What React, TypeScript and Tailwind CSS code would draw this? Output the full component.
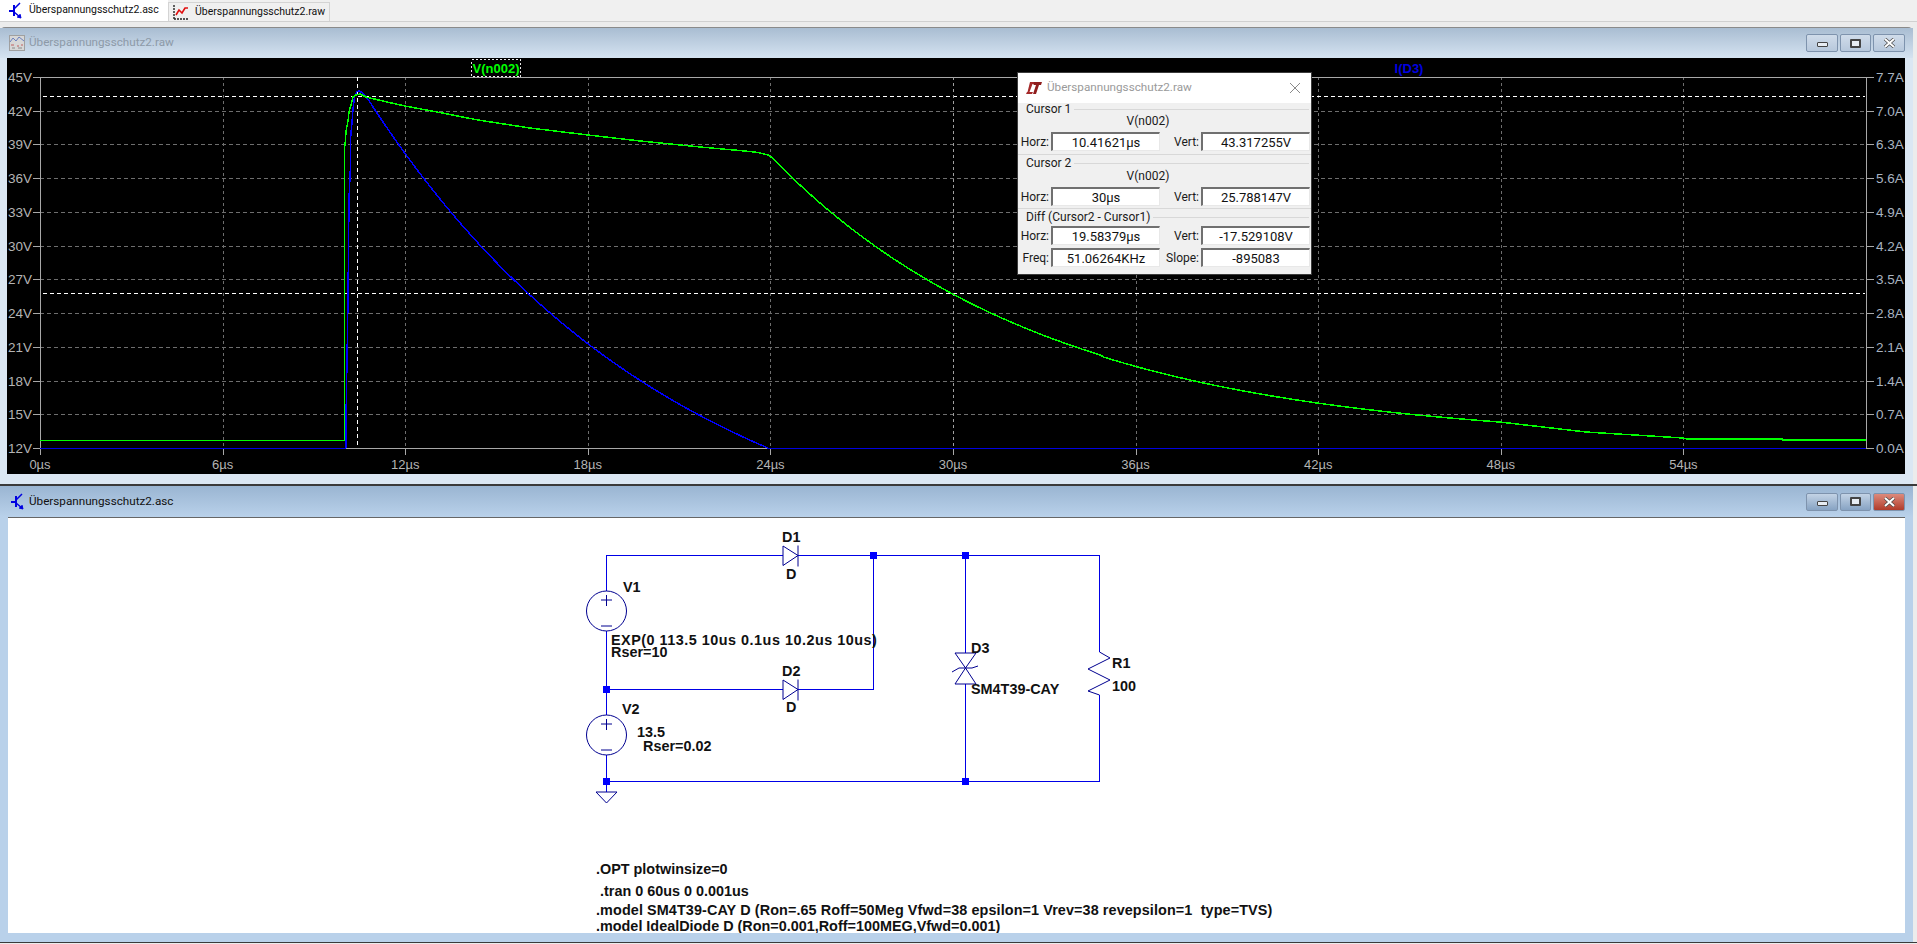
import React from 'react';

const mono = "font-['Liberation_Sans',sans-serif]";

const yTicks = [
  ['45V', '7.7A'], ['42V', '7.0A'], ['39V', '6.3A'], ['36V', '5.6A'], ['33V', '4.9A'], ['30V', '4.2A'],
  ['27V', '3.5A'], ['24V', '2.8A'], ['21V', '2.1A'], ['18V', '1.4A'], ['15V', '0.7A'], ['12V', '0.0A'],
];
const xTicks = ['0µs', '6µs', '12µs', '18µs', '24µs', '30µs', '36µs', '42µs', '48µs', '54µs'];

const X0 = 40, X1 = 1866, Y0 = 78, Y1 = 449;
const yAt = (i: number) => Y0 + ((Y1 - Y0) / 11) * i;
const xAt = (i: number) => X0 + ((X1 - X0) / 10) * i;

const greenPoints = () => {
  const pts: number[][] = [
    [345, 147], [346, 132], [348, 122], [349, 113], [351, 106], [352, 102], [353, 98], [356, 96],
    [360, 95], [366, 98], [387, 103], [405, 107], [437, 113], [478, 121], [530, 129], [588, 136], [640, 142], [700, 148], [745, 152], [758, 153.5], [768, 156],
  ];
  for (let x = 772; x <= 1500; x += 4) {
    const t = (x - 768) / 30.43;
    const v = 12.6 + 25.6 * Math.exp(-t / 9.06);
    pts.push([x, Y1 - (v - 12) * 11.24 + (x > 1100 ? 1 : 0)]);
  }
  pts.push([1586, 433], [1683, 439], [1687, 440], [1782, 440], [1783, 441], [X1, 441]);
  return pts.map((p) => p.join(',')).join(' ');
};

const bluePoints = () => {
  const pts: number[][] = [
    [346, 449], [346, 420], [348, 300], [349, 200], [350.5, 167], [350.5, 140], [352, 123], [353, 110], [354.7, 97], [356.7, 93], [359, 92], [362.7, 94], [365, 97],
  ];
  for (let x = 368; x < 768; x += 4) {
    const h = 497 * (Math.exp(-(x - 358) / 310) - 0.2665);
    pts.push([x, Y1 - h]);
  }
  pts.push([768, 449]);
  return pts.map((p) => p.join(',')).join(' ');
};

const TitleButtons = ({ active }: { active?: boolean }) => {
  const base = 'h-[18px] flex items-center justify-center rounded-[2px] border border-[#7e93ad] bg-gradient-to-b';
  const tone = active ? 'from-[#c3d3e5] to-[#87a3c3]' : 'from-[#d0dcea] to-[#b7c8dc]';
  return (
    <div className="flex gap-[2px] mr-[8px]">
      <div className={`${base} ${tone} w-[32px]`}>
        <div className="w-[11px] h-[5px] mt-[3px] border border-[#444] bg-[#e8edf3] rounded-[1px]" />
      </div>
      <div className={`${base} ${tone} w-[31px]`}>
        <div className="w-[11px] h-[9px] border-2 border-[#444] bg-[#e8edf3] rounded-[1px]" />
      </div>
      <div className={`${base} w-[32px] ${active ? 'from-[#dd8a7c] to-[#b03a2a] border-[#7a3a30]' : tone}`}>
        <svg width="13" height="10" viewBox="0 0 13 10">
          <path d="M2 1 L11 9 M11 1 L2 9" stroke="#4a4a4a" strokeWidth="3.4" />
          <path d="M2 1 L11 9 M11 1 L2 9" stroke="#fff" strokeWidth="2" />
        </svg>
      </div>
    </div>
  );
};

const TransistorIcon = () => (
  <svg className="shrink-0" width="13" height="17" viewBox="0 0 13 17" fill="none" stroke="#0000e0" strokeWidth="1.5">
    <path d="M0 9 H5 M5 3 V14" strokeWidth="2" />
    <path d="M5 7 L11 1 M5 10 L11 15" />
    <path d="M8 15 L12 16 L11 12" fill="#0000e0" strokeWidth="1" />
  </svg>
);

const WaveIcon = () => (
  <svg className="shrink-0" width="16" height="17" viewBox="0 0 16 17" fill="none">
    <path d="M1 1 V15 M1 15 H15" stroke="#222" strokeWidth="1.4" strokeDasharray="2 1" />
    <path d="M3 11 L6 6 L9 9 L12 4 L15 4" stroke="#e01010" strokeWidth="1.6" />
  </svg>
);

const PlotWinIcon = () => (
  <svg className="shrink-0" width="16" height="18" viewBox="0 0 16 18" fill="none">
    <rect x="0.5" y="1.5" width="15" height="15" fill="#d7d7d7" stroke="#a0a0a0" />
    <path d="M1 8 L4 4 L7 7 L10 3 L15 7" stroke="#6a80c0" />
    <path d="M2 11 H5 M8 12 H10 M12 11 H14" stroke="#c06060" />
    <path d="M3 14 H6 M9 14 H13" stroke="#8a8a8a" />
  </svg>
);

const PlotArea = () => (
  <svg width="1898" height="416" viewBox="7 59 1898 416" className={`block ${mono}`}>
    <rect x="7" y="59" width="1898" height="416" fill="#000" />
    <g shapeRendering="crispEdges" fill="none">
      {yTicks.slice(1, 11).map((_, i) => (
        <path key={i} d={`M${X0} ${Math.round(yAt(i + 1)) + 0.5} H${X1}`} stroke="#6e6e6e" strokeDasharray="4 3" />
      ))}
      {xTicks.slice(1).map((_, i) => (
        <path key={i} d={`M${Math.round(xAt(i + 1)) + 0.5} ${Y0} V${Y1}`} stroke="#6e6e6e" strokeDasharray="3 3" />
      ))}
      <rect x={X0 + 0.5} y={Y0 + 0.5} width={X1 - X0} height={Y1 - Y0} stroke="#a8a8a8" />
      {yTicks.map((_, i) => (
        <path key={i} d={`M33 ${Math.round(yAt(i)) + 0.5} H${X0} M${X1} ${Math.round(yAt(i)) + 0.5} H1874`} stroke="#a8a8a8" />
      ))}
      {xTicks.map((_, i) => (
        <path key={i} d={`M${Math.round(xAt(i)) + 0.5} ${Y1} V456`} stroke="#a8a8a8" />
      ))}
      <path d="M43 97.5 H1865 M43 294.5 H1865 M357.5 78 V449" stroke="#fff" strokeDasharray="4 3" />
      <path d="M953.5 78 V449" stroke="#a0a0a0" strokeDasharray="3 3" />
      <path d="M40 449.5 H346 M768 449.5 H1866" stroke="#0000e0" />
      <polyline points={bluePoints()} stroke="#0000ff" strokeWidth="1.5" />
      <path d="M40 441.5 H344 V147" stroke="#00ff00" />
      <polyline points={greenPoints()} stroke="#00ff00" strokeWidth="1.5" />
      <rect x="471.5" y="60.5" width="49" height="17" stroke="#e8e8e8" strokeDasharray="2 2" />
    </g>
    <text x="496" y="74" textAnchor="middle" className="text-[13px] font-bold fill-[#00ff00]">V(n002)</text>
    <text x="1409" y="74" textAnchor="middle" className="text-[13px] font-bold fill-[#0000e0]">I(D3)</text>
    {yTicks.map((t, i) => (
      <g key={t[0]} className="text-[13.5px] fill-[#b4b4b4]">
        <text x="32" y={yAt(i) + 5} textAnchor="end">{t[0]}</text>
        <text x="1876" y={yAt(i) + 5} className="fill-[#a9b4c0]">{t[1]}</text>
      </g>
    ))}
    {xTicks.map((t, i) => (
      <text key={t} x={xAt(i)} y="470" textAnchor="middle" className="text-[13px] fill-[#b4b4b4]">{t}</text>
    ))}
  </svg>
);

const Diode = ({ y }: { y: number }) => (
  <path d={`M783 ${y - 9.5} V${y + 10} L798 ${y} Z M798 ${y - 10} V${y + 11}`} stroke="#000090" fill="none" />
);

const Source = ({ cy }: { cy: number }) => (
  <g stroke="#000090" fill="none">
    <circle cx="606.5" cy={cy} r="20" />
    <path d={`M601 ${cy - 11} H612 M606.5 ${cy - 16} V${cy - 5} M601 ${cy + 15} H612`} />
  </g>
);

const Node = ({ x, y }: { x: number; y: number }) => <rect x={x - 3} y={y - 3} width="7" height="7" fill="#0000ff" />;

const labels: [string, number, number, string?][] = [
  ['D1', 782, 542], ['D', 786, 579], ['V1', 623, 592], ['EXP(0 113.5 10us 0.1us 10.2us 10us)', 611, 645, 'tracking-[0.5px]'], ['Rser=10', 611, 657],
  ['D2', 782, 676], ['D', 786, 712], ['V2', 622, 714], ['13.5', 637, 737], ['Rser=0.02', 643, 751],
  ['D3', 971, 653], ['SM4T39-CAY', 971, 694], ['R1', 1112, 668], ['100', 1112, 691],
  ['.OPT plotwinsize=0', 596, 874], ['.tran 0 60us 0 0.001us', 600, 896],
  ['.model SM4T39-CAY D (Ron=.65 Roff=50Meg Vfwd=38 epsilon=1 Vrev=38 revepsilon=1  type=TVS)', 596, 915, 'tracking-[0.1px]'],
  ['.model IdealDiode D (Ron=0.001,Roff=100MEG,Vfwd=0.001)', 596, 931],
];

const Schematic = () => (
  <svg width="1897" height="415" viewBox="8 518 1897 415" className={`block ${mono}`}>
    <path
      d="M606.5 591 V555.5 H783 M798 555.5 H1099.5 V652 M1099.5 695 V781.5 H606.5 V755 M606.5 715 V631 M606.5 689.5 H783 M798 689.5 H873.5 V555.5 M965.5 555.5 V653 M965.5 684 V781.5 M606.5 781.5 V792"
      stroke="#0000e6"
      fill="none"
      shapeRendering="crispEdges"
    />
    <Diode y={555.5} />
    <Diode y={689.5} />
    <Source cy={611} />
    <Source cy={735} />
    <path d="M596 792 H617 L606.5 803 Z" stroke="#000090" fill="none" />
    <path d="M955 653 H976 L965.5 668 L955 684 H976 L965.5 668 Z M952 672 L959 668 H972 L978 666" stroke="#000090" fill="none" />
    <path d="M1099.5 652 L1110 658 L1088 669 L1110 680 L1088 691 L1099.5 695" stroke="#000090" fill="none" />
    <Node x={873} y={555} />
    <Node x={606} y={689} />
    <Node x={606} y={781} />
    <Node x={965} y={555} />
    <Node x={965} y={781} />
    {labels.map(([text, x, y, extra]) => (
      <text key={text + y} x={x} y={y} xmlSpace="preserve" className={`text-[14.4px] font-bold fill-[#111] ${extra ?? ''}`}>{text}</text>
    ))}
  </svg>
);

const Field = ({ label, value, w = 'w-[30px]' }: { label: string; value: string; w?: string }) => (
  <>
    <span className={`${w} text-right text-[12px] leading-none text-[#1a1a1a] shrink-0 whitespace-nowrap`}>{label}</span>
    <div className="w-[109px] h-[19px] ml-[2px] flex items-center justify-center bg-white border-t-2 border-l-2 border-t-[#707070] border-l-[#707070] border-r border-b border-r-[#e8e8e8] border-b-[#e8e8e8] text-[13px] leading-none text-[#111] shrink-0">
      {value}
    </div>
  </>
);

const Row = ({ a, b, c, d }: { a: string; b: string; c: string; d: string }) => (
  <div className="flex items-center pl-[1px]">
    <Field label={a} value={b} />
    <Field label={c} value={d} w="w-[39px]" />
  </div>
);

const Legend = ({ text }: { text: string }) => (
  <div className="flex items-center h-[10px] pl-[8px] pr-[2px] gap-[3px]">
    <span className="text-[12px] leading-none text-[#1a1a1a] whitespace-nowrap">{text}</span>
    <div className="flex-1 h-px bg-[#d8d8d8]" />
  </div>
);

const CursorDialog = () => (
  <div className="absolute left-[1017px] top-[72px] w-[295px] h-[203px] border border-[#3c3c3c] bg-[#f0f0f0] flex flex-col font-['Roboto',sans-serif]">
    <div className="h-[30px] bg-white flex items-center pl-[8px] pr-[10px] shrink-0">
      <svg className="shrink-0" width="16" height="12" viewBox="0 0 16 12">
        <path d="M4 0 H9 L8 2 H6.5 L3.5 10 H7 L6 12 H0 L1 10 H1.5 Z" fill="#a52a2a" />
        <path d="M8 0 H16 L15 3 H13 L10 12 H7 L10 3 H7.5 Z" fill="#8f1d1d" />
      </svg>
      <span className="ml-[5px] text-[11.7px] leading-none text-[#9a9a9a] whitespace-nowrap">Überspannungsschutz2.raw</span>
      <svg className="ml-auto shrink-0" width="12" height="12" viewBox="0 0 12 12">
        <path d="M1 1 L11 11 M11 1 L1 11" stroke="#8a8a8a" />
      </svg>
    </div>
    <div className="h-[52px] pt-[1px] border-b border-[#d8d8d8] shrink-0">
      <Legend text="Cursor 1" />
      <div className="h-[12px] mt-[1px] w-[260px] text-center text-[12px] leading-[12px] text-[#1a1a1a]">V(n002)</div>
      <div className="mt-[5px]"><Row a="Horz:" b="10.41621µs" c="Vert:" d="43.317255V" /></div>
    </div>
    <div className="h-[54px] pt-[3px] border-b border-[#d8d8d8] shrink-0">
      <Legend text="Cursor 2" />
      <div className="h-[12px] mt-[2px] w-[260px] text-center text-[12px] leading-[12px] text-[#1a1a1a]">V(n002)</div>
      <div className="mt-[5px]"><Row a="Horz:" b="30µs" c="Vert:" d="25.788147V" /></div>
    </div>
    <div className="pt-[3px] flex flex-col shrink-0">
      <Legend text="Diff (Cursor2 - Cursor1)" />
      <div className="mt-[4px] flex flex-col gap-[3px]">
        <Row a="Horz:" b="19.58379µs" c="Vert:" d="-17.529108V" />
        <Row a="Freq:" b="51.06264KHz" c="Slope:" d="-895083" />
      </div>
    </div>
  </div>
);

export default function App() {
  return (
    <div className="relative w-[1917px] h-[944px] overflow-hidden bg-[#ececec] flex flex-col font-['Roboto',sans-serif]">
      <div className="h-[22px] flex items-end bg-[#f0f0f0] border-b border-[#d0d0d0] shrink-0">
        <div className="w-[168px] h-[21px] bg-white flex items-center pl-[9px]">
          <TransistorIcon />
          <span className="ml-[7px] text-[10.5px] leading-none text-[#111] whitespace-nowrap">Überspannungsschutz2.asc</span>
        </div>
        <div className="w-[162px] h-[19px] border border-b-0 border-[#d4d4d4] flex items-center pl-[4px]">
          <WaveIcon />
          <span className="ml-[6px] text-[10.5px] leading-none text-[#111] whitespace-nowrap">Überspannungsschutz2.raw</span>
        </div>
      </div>
      <div className="h-[5px] shrink-0" />
      <div className="w-[1913px] h-[457px] rounded-tl-[5px] rounded-tr-[5px] border-t border-[#8a8a8a] bg-[#dbe7f3] flex flex-col shrink-0">
        <div className="h-[30px] bg-gradient-to-b from-[#a9bdd2] to-[#d5e3f1] flex items-center pl-[9px] shrink-0">
          <PlotWinIcon />
          <span className="ml-[4px] text-[11.7px] leading-none text-[#8d9aa8] whitespace-nowrap">Überspannungsschutz2.raw</span>
          <div className="ml-auto"><TitleButtons /></div>
        </div>
        <div className="pl-[7px]"><PlotArea /></div>
      </div>
      <div className="h-[2px] bg-[#3a3a3a] shrink-0" />
      <div className="w-[1913px] h-[456px] rounded-tl-[5px] rounded-tr-[5px] bg-[#b9d1ea] flex flex-col shrink-0">
        <div className="h-[31px] bg-gradient-to-b from-[#9ab5d2] to-[#b9d1ea] flex items-center pl-[11px] shrink-0">
          <TransistorIcon />
          <span className="ml-[5px] text-[11.7px] leading-none text-[#111] whitespace-nowrap">Überspannungsschutz2.asc</span>
          <div className="ml-auto"><TitleButtons active /></div>
        </div>
        <div className="pl-[8px]">
          <div className="w-[1897px] bg-white border-t border-[#666]">
            <Schematic />
          </div>
        </div>
      </div>
      <div className="h-px bg-[#3a3a3a] shrink-0" />
      <CursorDialog />
    </div>
  );
}
